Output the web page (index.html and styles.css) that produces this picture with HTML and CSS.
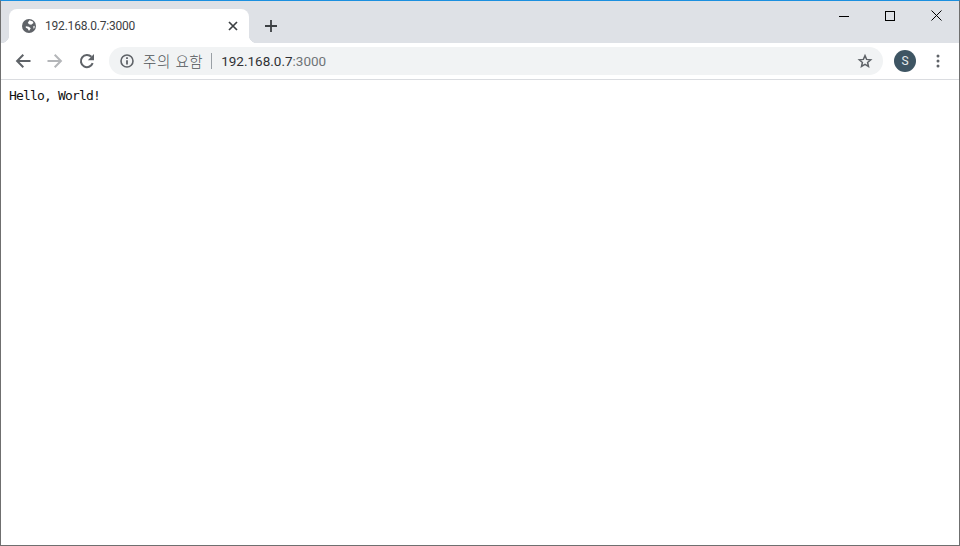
FILE: index.html
```html
<!DOCTYPE html>
<html lang="ko">
<head>
<meta charset="utf-8">
<title>192.168.0.7:3000</title>
<link rel="stylesheet" href="styles.css">
</head>
<body>
<div class="window">
  <div class="tabstrip">
    <div class="tab">
      <svg class="favicon" viewBox="0 0 16 16" width="16" height="16"><circle cx="8" cy="8" r="7" fill="#5f6368"/><path d="M8.500 2.200 11.800 3.400 12.500 5 10.200 6.700 8 6.300 6.800 4.700z" fill="#fff"/><path d="M4.800 8.300 7.800 8.700 9.800 10.300 8 13 6.800 10.800 4.800 9.800z" fill="#fff"/><path d="M12.300 8.300 13.700 7.800 13.500 10 12.500 10.800z" fill="#fff"/></svg>
      <span class="tab-title">192.168.0.7:3000</span>
      <svg class="tab-close" viewBox="0 0 10 10" width="10" height="10"><path d="M1 1l8 8M9 1l-8 8" stroke="#3c4043" stroke-width="1.700" fill="none"/></svg>
    </div>
    <svg class="newtab" viewBox="0 0 12 12" width="12" height="12"><path d="M6 0v12M0 6h12" stroke="#3c4043" stroke-width="1.800" fill="none"/></svg>
    <div class="winctrls">
      <div class="winbtn"><svg viewBox="0 0 10 10" width="10" height="10"><path d="M0 5.500h10" stroke="#000" stroke-width="1" fill="none"/></svg></div>
      <div class="winbtn"><svg viewBox="0 0 10 10" width="10" height="10"><rect x=".5" y=".5" width="9" height="9" stroke="#000" fill="none"/></svg></div>
      <div class="winbtn"><svg viewBox="0 0 11 11" width="11" height="11"><path d="M.5.500l10 10M10.500.500l-10 10" stroke="#000" fill="none"/></svg></div>
    </div>
  </div>
  <div class="toolbar">
    <svg class="navbtn" viewBox="0 0 16 16" width="16" height="16"><path d="M15.500 8H2.500M8.300 1.800 2.100 8l6.200 6.200" stroke="#5f6368" stroke-width="2" fill="none"/></svg>
    <svg class="navbtn" viewBox="0 0 16 16" width="16" height="16"><path d="M.5 8h13M7.700 1.800 13.900 8l-6.200 6.200" stroke="#b4b6b9" stroke-width="2" fill="none"/></svg>
    <svg class="navbtn" viewBox="0 0 16 16" width="16" height="16"><path d="M13.700 10.200A6.100 6.100 0 1 1 12.400 3.800" stroke="#5f6368" stroke-width="2" fill="none"/><path d="M15 1v6.200H8.800z" fill="#5f6368"/></svg>
    <div class="omnibox">
      <svg class="info" viewBox="0 0 14 14" width="14" height="14"><circle cx="7" cy="7" r="6" stroke="#5f6368" stroke-width="1.600" fill="none"/><path d="M7 6.200v4.300M7 3.300v1.700" stroke="#5f6368" stroke-width="1.800" fill="none"/></svg>
      <span class="warn">주의 요함</span>
      <span class="sep"></span>
      <span class="url">192.168.0.7<span class="port">:3000</span></span>
      <svg class="star" viewBox="0 0 16 16" width="16" height="16"><path d="M8 2.600l1.600 3.800 4.100.4-3.100 2.700.9 4L8 11.400l-3.500 2.100.9-4-3.100-2.700 4.100-.4z" stroke="#5f6368" stroke-width="1.500" fill="none"/></svg>
    </div>
    <div class="avatar">S</div>
    <svg class="menu" viewBox="0 0 4 14" width="4" height="14"><circle cx="2" cy="2" r="1.500" fill="#5f6368"/><circle cx="2" cy="7" r="1.500" fill="#5f6368"/><circle cx="2" cy="12" r="1.500" fill="#5f6368"/></svg>
  </div>
  <main class="content">Hello, World!</main>
</div>
</body>
</html>
```
FILE: styles.css
```css
* { box-sizing: border-box; }
html, body { margin: 0; height: 100%; background: #fff; overflow: hidden; }
.window {
  width: 960px;
  height: 546px;
  display: flex;
  flex-direction: column;
  border: 1px solid #6f6f6f;
  border-top-color: #1b8fdf;
  font-family: "Open Sans", "Liberation Sans", "Noto Sans CJK KR", sans-serif;
}
.tabstrip {
  height: 42px;
  flex: none;
  display: flex;
  align-items: flex-start;
  background: #dee1e6;
  padding: 8px 0 0 8px;
}
.tab {
  position: relative;
  width: 240px;
  height: 34px;
  background: #fff;
  border-radius: 8px 8px 0 0;
  display: flex;
  align-items: center;
  padding: 0 9px 0 12px;
}
.tab::before, .tab::after {
  content: "";
  position: absolute;
  bottom: 0;
  width: 8px;
  height: 8px;
}
.tab::before { left: -8px; background: radial-gradient(circle at 0 0, transparent 8px, #fff 8.500px); }
.tab::after { right: -8px; background: radial-gradient(circle at 100% 0, transparent 8px, #fff 8.500px); }
.favicon { flex: none; margin: 0 8px 0 0; }
.tab-title {
  flex: 1;
  font: 12px/16px "Roboto", "Liberation Sans", sans-serif;
  color: #3c4043;
  letter-spacing: -0.2px;
}
.tab-close { flex: none; margin-right: 2px; }
.newtab { flex: none; margin: 11px 0 0 16px; }
.winctrls { margin-left: auto; margin-top: -8px; display: flex; }
.winbtn { width: 46px; height: 29px; display: flex; align-items: center; justify-content: center; }
.toolbar {
  height: 37px;
  flex: none;
  display: flex;
  align-items: center;
  background: #fff;
  border-bottom: 1px solid #dadce0;
  padding: 0 0 1px 14px;
}
.navbtn { flex: none; margin-right: 16px; }
.omnibox {
  flex: none;
  width: 774px;
  height: 28px;
  margin-left: -2px;
  border-radius: 14px;
  background: #f1f3f4;
  display: flex;
  align-items: center;
  padding: 0 10px 0 11px;
  font: 13.500px/18px "Roboto", "Liberation Sans", "Noto Sans CJK KR", sans-serif;
  color: #5f6368;
}
.info { flex: none; margin-right: 9px; }
.warn { font-family: "Noto Sans CJK KR", sans-serif; font-size: 14.500px; font-weight: 300; color: #4f5357; white-space: nowrap; letter-spacing: 0.55px; }
.sep { width: 1px; height: 16px; background: #9aa0a6; margin: 0 9px 0 8px; flex: none; }
.url { color: #303134; flex: 1; font-size: 13.500px; letter-spacing: 0; }
.port { color: #6f7377; }
.star { flex: none; }
.avatar {
  flex: none;
  width: 22px;
  height: 22px;
  margin-left: 11px;
  border-radius: 50%;
  background: #3e5563;
  color: #e6eaed;
  font: 12px/22px "Roboto", "Liberation Sans", sans-serif;
  text-align: center;
}
.menu { flex: none; margin-left: 20px; }
.content {
  flex: 1;
  background: #fff;
  padding: 8px 8px;
  font: 13px/16px "DejaVu Sans Mono", monospace;
  letter-spacing: -0.82px;
  color: #111;
  white-space: pre;
}
```
